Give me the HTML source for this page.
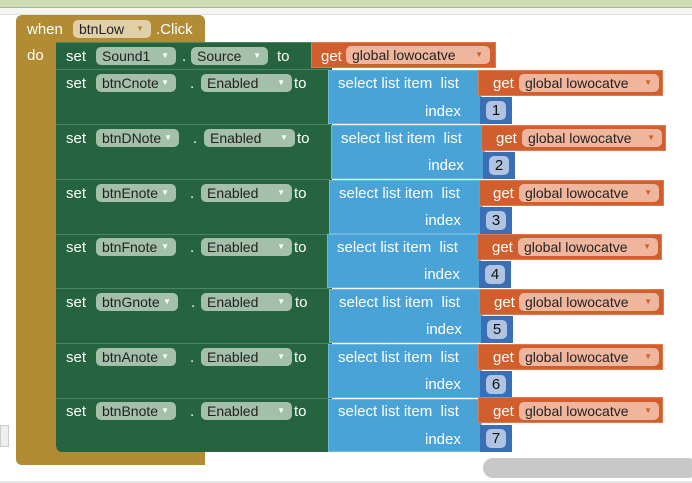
<!DOCTYPE html>
<html><head><meta charset="utf-8"><style>
*{margin:0;padding:0;box-sizing:border-box}
body{width:692px;height:483px;background:#fff;position:relative;overflow:hidden;font-family:"Liberation Sans",Arial,sans-serif;font-size:15px;color:#fff}
.a{position:absolute}
.t{position:absolute;line-height:16px;white-space:nowrap;margin-top:1px}
.f{position:absolute;height:18px;border-radius:5px;color:#222;line-height:18px;padding-left:6px;white-space:nowrap;font-size:14px}
.g{background:#a4c0ab}
.o{background:#f0b69d}
.y{background:#e0d0a8}
.f i{font-style:normal;font-size:8px;color:#fff;position:absolute;right:7px;top:0}
.o i{color:#d05f2d}
.y i{color:#b18c35}
.sel{position:absolute;background:#4aa3d6;border:1px solid #6cb8e0}
.get{position:absolute;background:#d05f2d;height:26px;border:1px solid #e07a4c}
.idx{position:absolute;background:#3a6fb5;height:27px;width:32px}
.num{position:absolute;left:6px;top:4px;width:20px;height:19px;background:#b0c4e2;border-radius:5px;color:#111;text-align:center;line-height:19px}
.sep{position:absolute;left:56px;width:274px;height:1px;background:#4c8664}
</style></head><body>
<div class="a" style="left:0;top:0;width:692px;height:7px;background:#cedcb5"></div>
<div class="a" style="left:0;top:7px;width:692px;height:1px;background:#a8b39a"></div>
<div class="a" style="left:0;top:8px;width:692px;height:6px;background:#f5f6f0"></div>
<div class="a" style="left:0;top:14px;width:692px;height:1px;background:#e2e2e2"></div>
<div class="a" style="left:0;top:425px;width:9px;height:22px;background:#eee;border:1px solid #ccc"></div>
<div class="a" style="left:483px;top:458px;width:215px;height:20px;background:#c8c8c8;border-radius:10px"></div>
<div class="a" style="left:0;top:481px;width:692px;height:2px;background:#e8e8e8"></div>

<div class="a" style="left:16px;top:15px;width:189px;height:28px;background:#b18c35;border-radius:6px 6px 0 0"></div>
<div class="a" style="left:16px;top:40px;width:40px;height:425px;background:#b18c35;border-radius:0 0 0 6px"></div>
<div class="a" style="left:16px;top:448px;width:189px;height:17px;background:#b18c35;border-radius:0 0 0 6px"></div>
<div class="t" style="left:27px;top:21px">when</div>
<div class="f y" style="left:73px;top:20px;width:78px">btnLow<i>▼</i></div>
<div class="t" style="left:156px;top:21px">.Click</div>
<div class="t" style="left:27px;top:47px">do</div>

<div class="a" style="left:56px;top:42px;width:276px;height:410px;background:#26643f;border-radius:4px 0 0 6px"></div>
<div class="a" style="left:56px;top:42px;width:260px;height:27px;background:#26643f;border-top:1px solid #4c8664"></div>
<div class="t" style="left:66px;top:48px">set</div>
<div class="f g" style="left:96px;top:47px;width:80px">Sound1<i>▼</i></div>
<div class="t" style="left:182px;top:48px">.</div>
<div class="f g" style="left:191px;top:47px;width:77px">Source<i>▼</i></div>
<div class="t" style="left:277px;top:48px">to</div>
<div class="get" style="left:311px;top:42px;width:185px"></div>
<div class="t" style="left:321px;top:48px">get</div>
<div class="f o" style="left:346px;top:46px;width:144px">global lowocatve<i>▼</i></div>

<div class="sep" style="top:69px"></div>
<div class="sep" style="top:124px"></div>
<div class="sep" style="top:179px"></div>
<div class="sep" style="top:234px"></div>
<div class="sep" style="top:288px"></div>
<div class="sep" style="top:343px"></div>
<div class="sep" style="top:398px"></div>

<div class="t" style="left:66px;top:75px">set</div>
<div class="f g" style="left:96px;top:74px;width:80px">btnCnote<i>▼</i></div>
<div class="t" style="left:190px;top:75px">.</div>
<div class="f g" style="left:201px;top:74px;width:91px">Enabled<i>▼</i></div>
<div class="t" style="left:294px;top:75px">to</div>
<div class="sel" style="left:328px;top:70px;width:154px;height:54px"></div>
<div class="t" style="left:338px;top:75px">select list item&nbsp; list</div>
<div class="t" style="left:425px;top:103px">index</div>
<div class="get" style="left:478px;top:70px;width:185px"></div>
<div class="t" style="left:493px;top:75px">get</div>
<div class="f o" style="left:519px;top:74px;width:140px">global lowocatve<i>▼</i></div>
<div class="idx" style="left:480px;top:97px"><div class="num">1</div></div>

<div class="t" style="left:66px;top:130px">set</div>
<div class="f g" style="left:96px;top:129px;width:83px">btnDNote<i>▼</i></div>
<div class="t" style="left:193px;top:130px">.</div>
<div class="f g" style="left:204px;top:129px;width:91px">Enabled<i>▼</i></div>
<div class="t" style="left:297px;top:130px">to</div>
<div class="sel" style="left:331px;top:125px;width:154px;height:54px"></div>
<div class="t" style="left:341px;top:130px">select list item&nbsp; list</div>
<div class="t" style="left:428px;top:157px">index</div>
<div class="get" style="left:481px;top:125px;width:185px"></div>
<div class="t" style="left:496px;top:130px">get</div>
<div class="f o" style="left:522px;top:129px;width:140px">global lowocatve<i>▼</i></div>
<div class="idx" style="left:483px;top:152px"><div class="num">2</div></div>

<div class="t" style="left:66px;top:185px">set</div>
<div class="f g" style="left:96px;top:184px;width:80px">btnEnote<i>▼</i></div>
<div class="t" style="left:190px;top:185px">.</div>
<div class="f g" style="left:201px;top:184px;width:91px">Enabled<i>▼</i></div>
<div class="t" style="left:294px;top:185px">to</div>
<div class="sel" style="left:329px;top:180px;width:154px;height:54px"></div>
<div class="t" style="left:339px;top:185px">select list item&nbsp; list</div>
<div class="t" style="left:425px;top:212px">index</div>
<div class="get" style="left:479px;top:180px;width:185px"></div>
<div class="t" style="left:493px;top:185px">get</div>
<div class="f o" style="left:519px;top:184px;width:140px">global lowocatve<i>▼</i></div>
<div class="idx" style="left:480px;top:207px"><div class="num">3</div></div>

<div class="t" style="left:66px;top:239px">set</div>
<div class="f g" style="left:96px;top:238px;width:80px">btnFnote<i>▼</i></div>
<div class="t" style="left:190px;top:239px">.</div>
<div class="f g" style="left:201px;top:238px;width:91px">Enabled<i>▼</i></div>
<div class="t" style="left:294px;top:239px">to</div>
<div class="sel" style="left:327px;top:234px;width:154px;height:54px"></div>
<div class="t" style="left:337px;top:239px">select list item&nbsp; list</div>
<div class="t" style="left:424px;top:266px">index</div>
<div class="get" style="left:477px;top:234px;width:185px"></div>
<div class="t" style="left:492px;top:239px">get</div>
<div class="f o" style="left:518px;top:238px;width:140px">global lowocatve<i>▼</i></div>
<div class="idx" style="left:479px;top:261px"><div class="num">4</div></div>

<div class="t" style="left:66px;top:294px">set</div>
<div class="f g" style="left:96px;top:293px;width:82px">btnGnote<i>▼</i></div>
<div class="t" style="left:191px;top:294px">.</div>
<div class="f g" style="left:201px;top:293px;width:91px">Enabled<i>▼</i></div>
<div class="t" style="left:295px;top:294px">to</div>
<div class="sel" style="left:329px;top:289px;width:154px;height:54px"></div>
<div class="t" style="left:339px;top:294px">select list item&nbsp; list</div>
<div class="t" style="left:426px;top:321px">index</div>
<div class="get" style="left:479px;top:289px;width:185px"></div>
<div class="t" style="left:494px;top:294px">get</div>
<div class="f o" style="left:519px;top:293px;width:140px">global lowocatve<i>▼</i></div>
<div class="idx" style="left:481px;top:316px"><div class="num">5</div></div>

<div class="t" style="left:66px;top:349px">set</div>
<div class="f g" style="left:96px;top:348px;width:80px">btnAnote<i>▼</i></div>
<div class="t" style="left:190px;top:349px">.</div>
<div class="f g" style="left:201px;top:348px;width:91px">Enabled<i>▼</i></div>
<div class="t" style="left:294px;top:349px">to</div>
<div class="sel" style="left:328px;top:344px;width:154px;height:54px"></div>
<div class="t" style="left:338px;top:349px">select list item&nbsp; list</div>
<div class="t" style="left:425px;top:376px">index</div>
<div class="get" style="left:478px;top:344px;width:185px"></div>
<div class="t" style="left:493px;top:349px">get</div>
<div class="f o" style="left:519px;top:348px;width:140px">global lowocatve<i>▼</i></div>
<div class="idx" style="left:480px;top:371px"><div class="num">6</div></div>

<div class="t" style="left:66px;top:403px">set</div>
<div class="f g" style="left:96px;top:402px;width:80px">btnBnote<i>▼</i></div>
<div class="t" style="left:190px;top:403px">.</div>
<div class="f g" style="left:201px;top:402px;width:91px">Enabled<i>▼</i></div>
<div class="t" style="left:294px;top:403px">to</div>
<div class="sel" style="left:328px;top:399px;width:154px;height:53px"></div>
<div class="t" style="left:338px;top:403px">select list item&nbsp; list</div>
<div class="t" style="left:425px;top:431px">index</div>
<div class="get" style="left:478px;top:397px;width:185px"></div>
<div class="t" style="left:493px;top:403px">get</div>
<div class="f o" style="left:519px;top:402px;width:140px">global lowocatve<i>▼</i></div>
<div class="idx" style="left:480px;top:425px"><div class="num">7</div></div>
</body></html>
